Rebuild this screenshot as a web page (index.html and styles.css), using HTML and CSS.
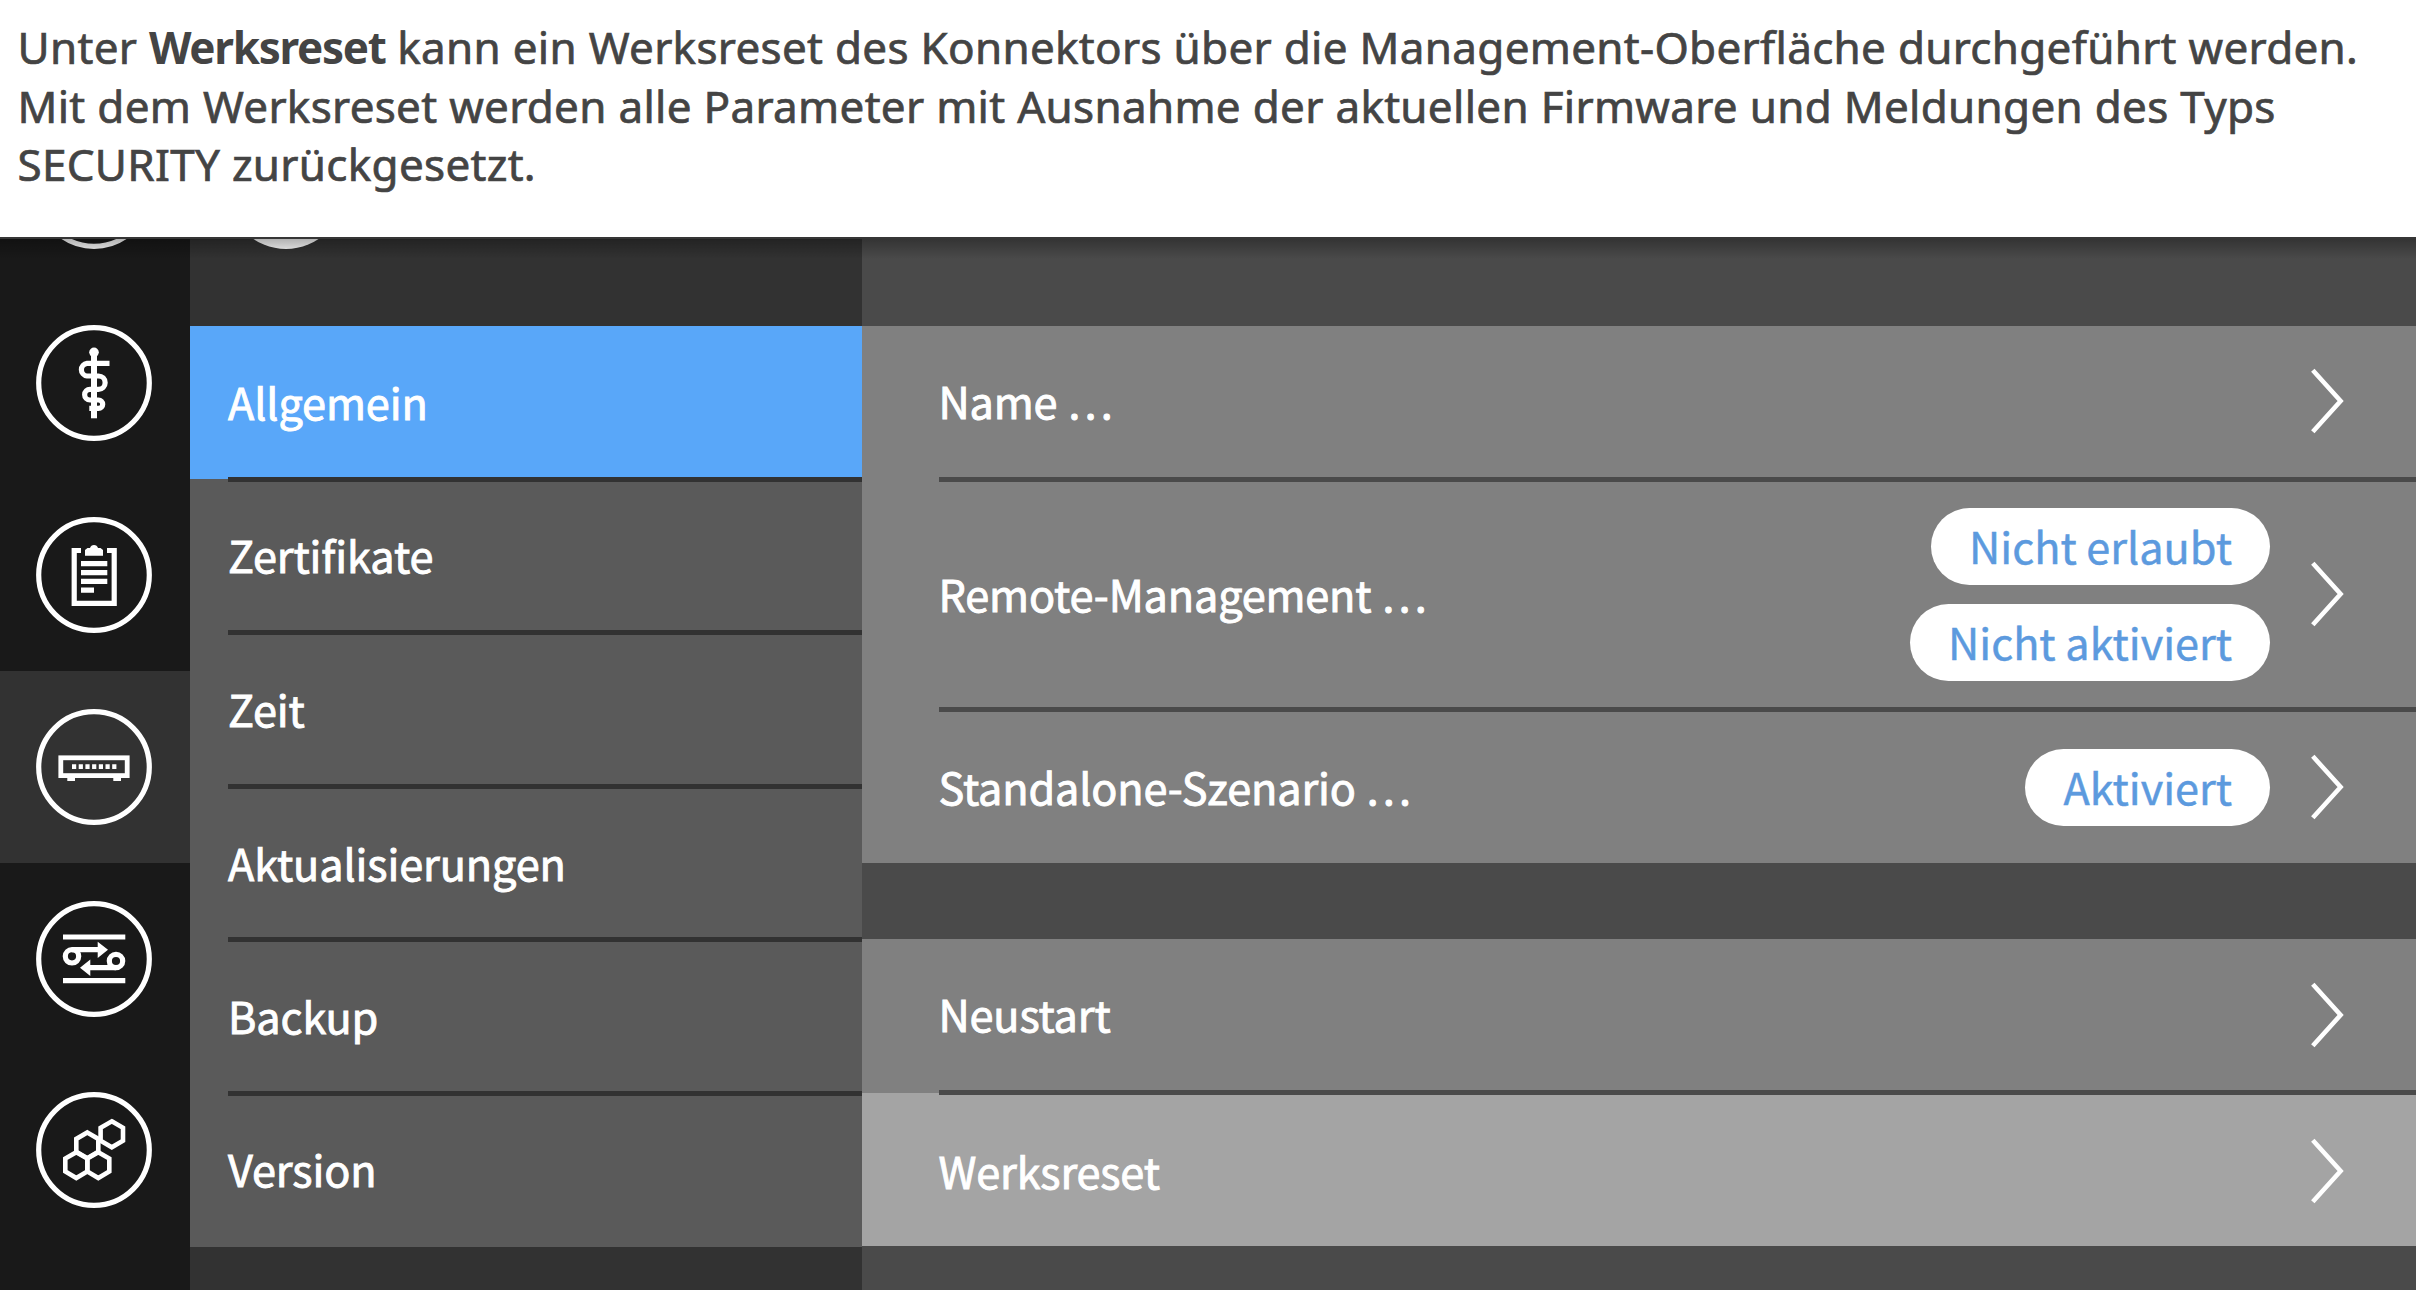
FILE: index.html
```html
<!DOCTYPE html>
<html lang="de">
<head>
<meta charset="utf-8">
<title>Werksreset</title>
<link rel="stylesheet" href="styles.css">
</head>
<body>
<p class="intro"><span class="line">Unter <b>Werksreset</b> kann ein Werksreset des Konnektors über die Management-Oberfläche durchgeführt werden.</span><span class="line">Mit dem Werksreset werden alle Parameter mit Ausnahme der aktuellen Firmware und Meldungen des Typs</span><span class="line">SECURITY zurückgesetzt.</span></p>
<div class="app">
  <nav class="rail">
    <div class="rail-item rail-cut"><svg class="icon" viewBox="0 0 116 116"><circle class="ring" cx="58" cy="58" r="55.3"/></svg></div>
    <div class="rail-item"><svg class="icon" viewBox="0 0 116 116"><circle class="ring" cx="58" cy="58" r="55.3"/><circle class="fill" cx="58" cy="27.3" r="4.8"/><path class="rod" d="M58 27V93.3"/><path class="thin" d="M73.5 38.3H51a6.4 6.4 0 0 0 0 12.7H62.5a6.6 6.6 0 0 1 0 13.3H54a5.3 5.3 0 0 0 0 10.7H62.5a4.2 4.2 0 0 1 0 8.4H53.3"/></svg></div>
    <div class="rail-item"><svg class="icon" viewBox="0 0 116 116"><circle class="ring" cx="58" cy="58" r="55.3"/><path class="thin" d="M45 33.5H38.2V86.4H78.2V33.5H71M45 46.7H71.3M45 55.7H71.3M45 64.3H71.3M45 73.2H58"/><path class="fill" d="M49 38.7V33L51.5 31H54A4.2 4.2 0 0 1 62 31H64.5L67 33V38.7Z"/></svg></div>
    <div class="rail-item rail-active"><svg class="icon" viewBox="0 0 116 116"><circle class="ring" cx="58" cy="58" r="55.3"/><rect class="frame" x="24.8" y="48.8" width="66.4" height="17.8"/><path class="dots" d="M36 57.7H81"/><path class="fill" d="M31.3 68H39V72H31.3ZM77.3 68H85V72H77.3Z"/></svg></div>
    <div class="rail-item"><svg class="icon" viewBox="0 0 116 116"><circle class="ring" cx="58" cy="58" r="55.3"/><path class="thin" d="M27 36H89.3M27 79.7H89.3M36 48.7H64M80 66.7H52"/><circle class="thin" cx="36" cy="55.3" r="6.7"/><circle class="thin" cx="80" cy="60" r="6.7"/><path class="fill" d="M61.7 40.7L72 48.7L61.7 57ZM54.3 58.5L44 66.7L54.3 75Z"/></svg></div>
    <div class="rail-item"><svg class="icon" viewBox="0 0 116 116"><circle class="ring" cx="58" cy="58" r="55.3"/><g class="hex"><path d="M75.8 29.3l11.2 6.5v13l-11.2 6.5l-11.2-6.5v-13z"/><path d="M51.3 40.5l11 6.4v12.8l-11 6.5l-11-6.5V46.9z"/><path d="M40.3 60.2l11 6.4v12.9l-11 6.5l-11-6.5V66.6z"/><path d="M62.3 60.2l11 6.4v12.9l-11 6.5l-11-6.5V66.6z"/></g></svg></div>
  </nav>
  <div class="menu">
    <div class="menu-head"><svg class="icon" viewBox="0 0 116 116"><circle class="fill" cx="58" cy="58" r="58"/></svg></div>
    <div class="menu-item selected">Allgemein</div>
    <div class="menu-item">Zertifikate</div>
    <div class="menu-item">Zeit</div>
    <div class="menu-item even">Aktualisierungen</div>
    <div class="menu-item">Backup</div>
    <div class="menu-item">Version</div>
  </div>
  <main class="main">
    <div class="group">
      <div class="row raised"><span class="label">Name …</span><svg class="chev" viewBox="0 0 33 66"><path d="M1.8 2.3L29.6 33L1.8 63.7"/></svg></div>
      <div class="row tall"><span class="label">Remote-Management …</span><div class="pills"><span class="pill">Nicht erlaubt</span><span class="pill">Nicht aktiviert</span></div><svg class="chev" viewBox="0 0 33 66"><path d="M1.8 2.3L29.6 33L1.8 63.7"/></svg></div>
      <div class="row lowered"><span class="label">Standalone-Szenario …</span><div class="pills"><span class="pill">Aktiviert</span></div><svg class="chev" viewBox="0 0 33 66"><path d="M1.8 2.3L29.6 33L1.8 63.7"/></svg></div>
    </div>
    <div class="group">
      <div class="row raised"><span class="label">Neustart</span><svg class="chev" viewBox="0 0 33 66"><path d="M1.8 2.3L29.6 33L1.8 63.7"/></svg></div>
      <div class="row hover lowered"><span class="label">Werksreset</span><svg class="chev" viewBox="0 0 33 66"><path d="M1.8 2.3L29.6 33L1.8 63.7"/></svg></div>
    </div>
  </main>
</div>
</body>
</html>
```
FILE: styles.css
```css
* { box-sizing: border-box; }
html, body { margin: 0; height: 100%; overflow: hidden; }
body {
  display: flex;
  flex-direction: column;
  background: #fff;
  font-family: "Noto Sans CJK JP", "Noto Sans", sans-serif;
}
.intro {
  flex: none;
  height: 237px;
  margin: 0;
  padding: 18px 0 0 17.5px;
  display: flex;
  flex-direction: column;
  align-items: flex-start;
  font: 44px/58.5px "Noto Sans", sans-serif;
  letter-spacing: .3px;
  -webkit-text-stroke: .7px #444;
  color: #444;
}
.intro b { letter-spacing: -1.3px; -webkit-text-stroke: 0; }
.line { white-space: nowrap; }
.app {
  flex: 1;
  min-height: 0;
  display: grid;
  grid-template-columns: 190px 671.5px 1fr;
  position: relative;
  overflow: hidden;
  border-top: 2px solid #363636;
  font-size: 43.2px;
  letter-spacing: -.1px;
  color: #fff;
  -webkit-text-stroke: .9px currentColor;
}
.app::after {
  content: "";
  position: absolute;
  inset: 0 0 auto 0;
  height: 20px;
  background: linear-gradient(rgba(0,0,0,.3), rgba(0,0,0,0));
}
.rail { background: #191919; }
.rail-item {
  height: 191.9px;
  display: flex;
  align-items: center;
  justify-content: center;
  padding-right: 2px;
}
.rail-cut { margin-top: -144px; }
.rail-active { background: #323232; }
.icon { width: 116px; height: 116px; display: block; }
.icon .fill { fill: #fff; stroke: none; }
.ring, .thin, .rod, .frame, .dots, .hex { fill: none; stroke: #fff; stroke-width: 5.2; }
.rod { stroke-width: 6; }
.frame { stroke-width: 4.8; }
.dots { stroke-width: 4.8; stroke-dasharray: 4.2 2.5; }
.hex { stroke-width: 4.6; }
.menu { background: #323232; }
.menu-head { height: 86.5px; padding: 0 38px; overflow: hidden; }
.menu-head .icon { margin-top: -106px; }
.menu-item {
  height: 153.5px;
  padding-left: 38px;
  padding-bottom: 3.5px;
  display: flex;
  align-items: center;
  position: relative;
  background: #5a5a5a;
}
.even { padding-bottom: 2px; }
.selected { background: #59a7f9; }
.menu-item:not(:last-child)::after, .row:not(:last-child)::after {
  content: "";
  position: absolute;
  z-index: 1;
  left: 38px;
  right: 0;
  bottom: -2.5px;
  height: 5px;
  background: #323232;
}
.main { background: #4a4a4a; padding-top: 86.5px; }
.group { margin-bottom: 76.5px; }
.row {
  height: 153.6px;
  padding: 0 72px 0 77px;
  display: flex;
  align-items: center;
  position: relative;
  background: #808080;
}
.row:not(:last-child)::after { left: 77px; background: #4a4a4a; }
.tall { height: 230px; }
.raised { padding-bottom: 2.5px; }
.lowered { padding-top: 2.5px; }
.hover { background: #a4a4a4; }
.label { margin-right: auto; padding-bottom: 2.5px; letter-spacing: -.15px; }
.pills { display: flex; flex-direction: column; align-items: flex-end; gap: 19px; margin-right: 41px; }
.pill {
  height: 77px;
  padding: 0 38px 2.5px;
  border-radius: 39px;
  display: flex;
  align-items: center;
  background: #fff;
  color: #5c9ade;
  letter-spacing: 0;
  -webkit-text-stroke-width: .5px;
}
.chev { width: 33px; height: 66px; fill: none; stroke: #fff; stroke-width: 4.6; }
```
